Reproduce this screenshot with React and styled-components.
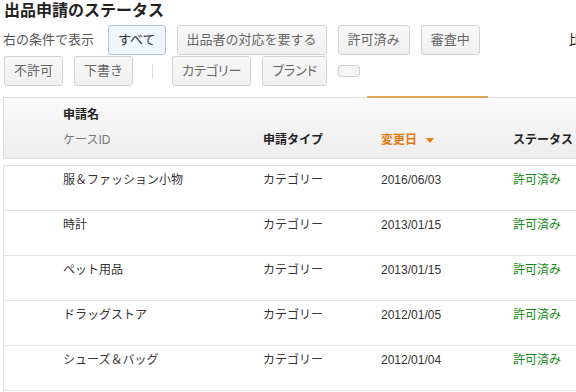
import styled, { createGlobalStyle } from 'styled-components';

const GlobalStyle = createGlobalStyle`
  body {
    margin: 0;
    overflow: hidden;
    background: #fff;
    font-family: "Liberation Sans", "Noto Sans CJK JP", sans-serif;
    color: #333;
  }
`;

const Page = styled.div`
  display: flex;
  flex-direction: column;
  width: 640px;
`;

const Title = styled.h1`
  margin: 0;
  padding-left: 4px;
  height: 22px;
  font-size: 16px;
  line-height: 22px;
  font-weight: bold;
  color: #222;
`;

const Filters = styled.div`
  display: flex;
  flex-direction: column;
  gap: 1px;
  margin-top: 3px;
  padding-left: 3px;
`;

const FilterRow = styled.div`
  display: flex;
  flex-direction: row;
  align-items: center;
  gap: 11px;
  padding-left: ${(p) => (p.$indent ? '1px' : '0')};
`;

const Label = styled.span`
  margin-right: 3px;
  font-size: 13px;
  line-height: 30px;
  color: #555;
`;

const FilterButton = styled.button`
  font-family: inherit;
  font-size: 13px;
  line-height: 18px;
  height: 30px;
  padding: 5px 9px;
  border-radius: 3px;
  font-feature-settings: ${(p) => (p.$narrow ? '"palt"' : 'normal')};
  white-space: nowrap;
  border: 1px solid ${(p) => (p.$active ? '#a9c6e6' : '#d2d2d2')};
  background: ${(p) => (p.$active ? '#edf5fd' : 'linear-gradient(#f8f8f8, #f0f0f0)')};
  color: ${(p) => (p.$active ? '#333' : '#666')};
`;

const EmptyButton = styled.span`
  width: 22px;
  height: 12px;
  box-sizing: border-box;
  border: 1px solid #cfcfcf;
  border-radius: 3px;
  background: #f4f4f4;
`;

const Separator = styled.span`
  width: 1px;
  height: 14px;
  margin: 0 8px;
  background: #dcdcdc;
`;

const Extra = styled.span`
  margin-left: 78px;
  font-size: 13px;
  line-height: 30px;
  color: #222;
  white-space: nowrap;
`;

const Table = styled.div`
  display: flex;
  flex-direction: column;
  margin-top: 11px;
  margin-left: 3px;
`;

const columns = '45px 200px 118px 121px 1fr';

const Header = styled.div`
  display: grid;
  grid-template-columns: ${columns};
  align-items: end;
  padding: 7px 0 8px;
  border: 1px solid #dedede;
  border-right: none;
  background: linear-gradient(#fafafa, #ededed);
  font-size: 12px;
  line-height: 20px;
`;

const HeadCell = styled.div`
  position: relative;
  display: flex;
  flex-direction: column;
  gap: 5px;
  align-self: stretch;
  justify-content: flex-end;
  padding-left: ${(p) => p.$pad || 14}px;
  font-weight: bold;
  color: ${(p) => (p.$sorted ? '#e47911' : '#222')};

  ${(p) =>
    p.$sorted &&
    `&::before {
      content: '';
      position: absolute;
      left: 0;
      right: 0;
      top: -9px;
      height: 2px;
      background: #e4a35a;
    }`}
`;

const SubHead = styled.span`
  font-weight: normal;
  color: #777;
`;

const SortArrow = styled.span`
  display: inline-block;
  margin-left: 9px;
  vertical-align: middle;
  border-left: 4px solid transparent;
  border-right: 4px solid transparent;
  border-top: 5px solid #e47911;
`;

const Body = styled.div`
  display: flex;
  flex-direction: column;
  margin-top: 6px;
  border-left: 1px solid #e3e3e3;
  border-bottom: 1px solid #e3e3e3;
`;

const Row = styled.div`
  display: grid;
  grid-template-columns: ${columns};
  height: 45px;
  box-sizing: border-box;
  padding-top: 4px;
  border-top: 1px solid #e3e3e3;
  font-size: 12px;
  line-height: 20px;
`;

const Cell = styled.div`
  padding-left: ${(p) => p.$pad || 14}px;
  color: ${(p) => (p.$ok ? '#138a13' : '#333')};
  white-space: nowrap;
`;

const rows = [
  { name: '服＆ファッション小物', type: 'カテゴリー', date: '2016/06/03', status: '許可済み' },
  { name: '時計', type: 'カテゴリー', date: '2013/01/15', status: '許可済み' },
  { name: 'ペット用品', type: 'カテゴリー', date: '2013/01/15', status: '許可済み' },
  { name: 'ドラッグストア', type: 'カテゴリー', date: '2012/01/05', status: '許可済み' },
  { name: 'シューズ＆バッグ', type: 'カテゴリー', date: '2012/01/04', status: '許可済み' },
];

export default function App() {
  return (
    <Page>
      <GlobalStyle />
      <Title>出品申請のステータス</Title>
      <Filters>
        <FilterRow>
          <Label>右の条件で表示</Label>
          <FilterButton $active>すべて</FilterButton>
          <FilterButton>出品者の対応を要する</FilterButton>
          <FilterButton>許可済み</FilterButton>
          <FilterButton>審査中</FilterButton>
          <Extra>比較</Extra>
        </FilterRow>
        <FilterRow $indent>
          <FilterButton>不許可</FilterButton>
          <FilterButton>下書き</FilterButton>
          <Separator />
          <FilterButton $narrow>カテゴリー</FilterButton>
          <FilterButton $narrow>ブランド</FilterButton>
          <EmptyButton />
        </FilterRow>
      </Filters>
      <Table>
        <Header>
          <HeadCell />
          <HeadCell>
            申請名
            <SubHead>ケースID</SubHead>
          </HeadCell>
          <HeadCell>申請タイプ</HeadCell>
          <HeadCell $sorted>
            <span>
              変更日
              <SortArrow />
            </span>
          </HeadCell>
          <HeadCell $pad={25}>ステータス</HeadCell>
        </Header>
        <Body>
          {rows.map((r, i) => (
            <Row key={i}>
              <Cell />
              <Cell>{r.name}</Cell>
              <Cell>{r.type}</Cell>
              <Cell>{r.date}</Cell>
              <Cell $pad={25} $ok>{r.status}</Cell>
            </Row>
          ))}
        </Body>
      </Table>
    </Page>
  );
}
